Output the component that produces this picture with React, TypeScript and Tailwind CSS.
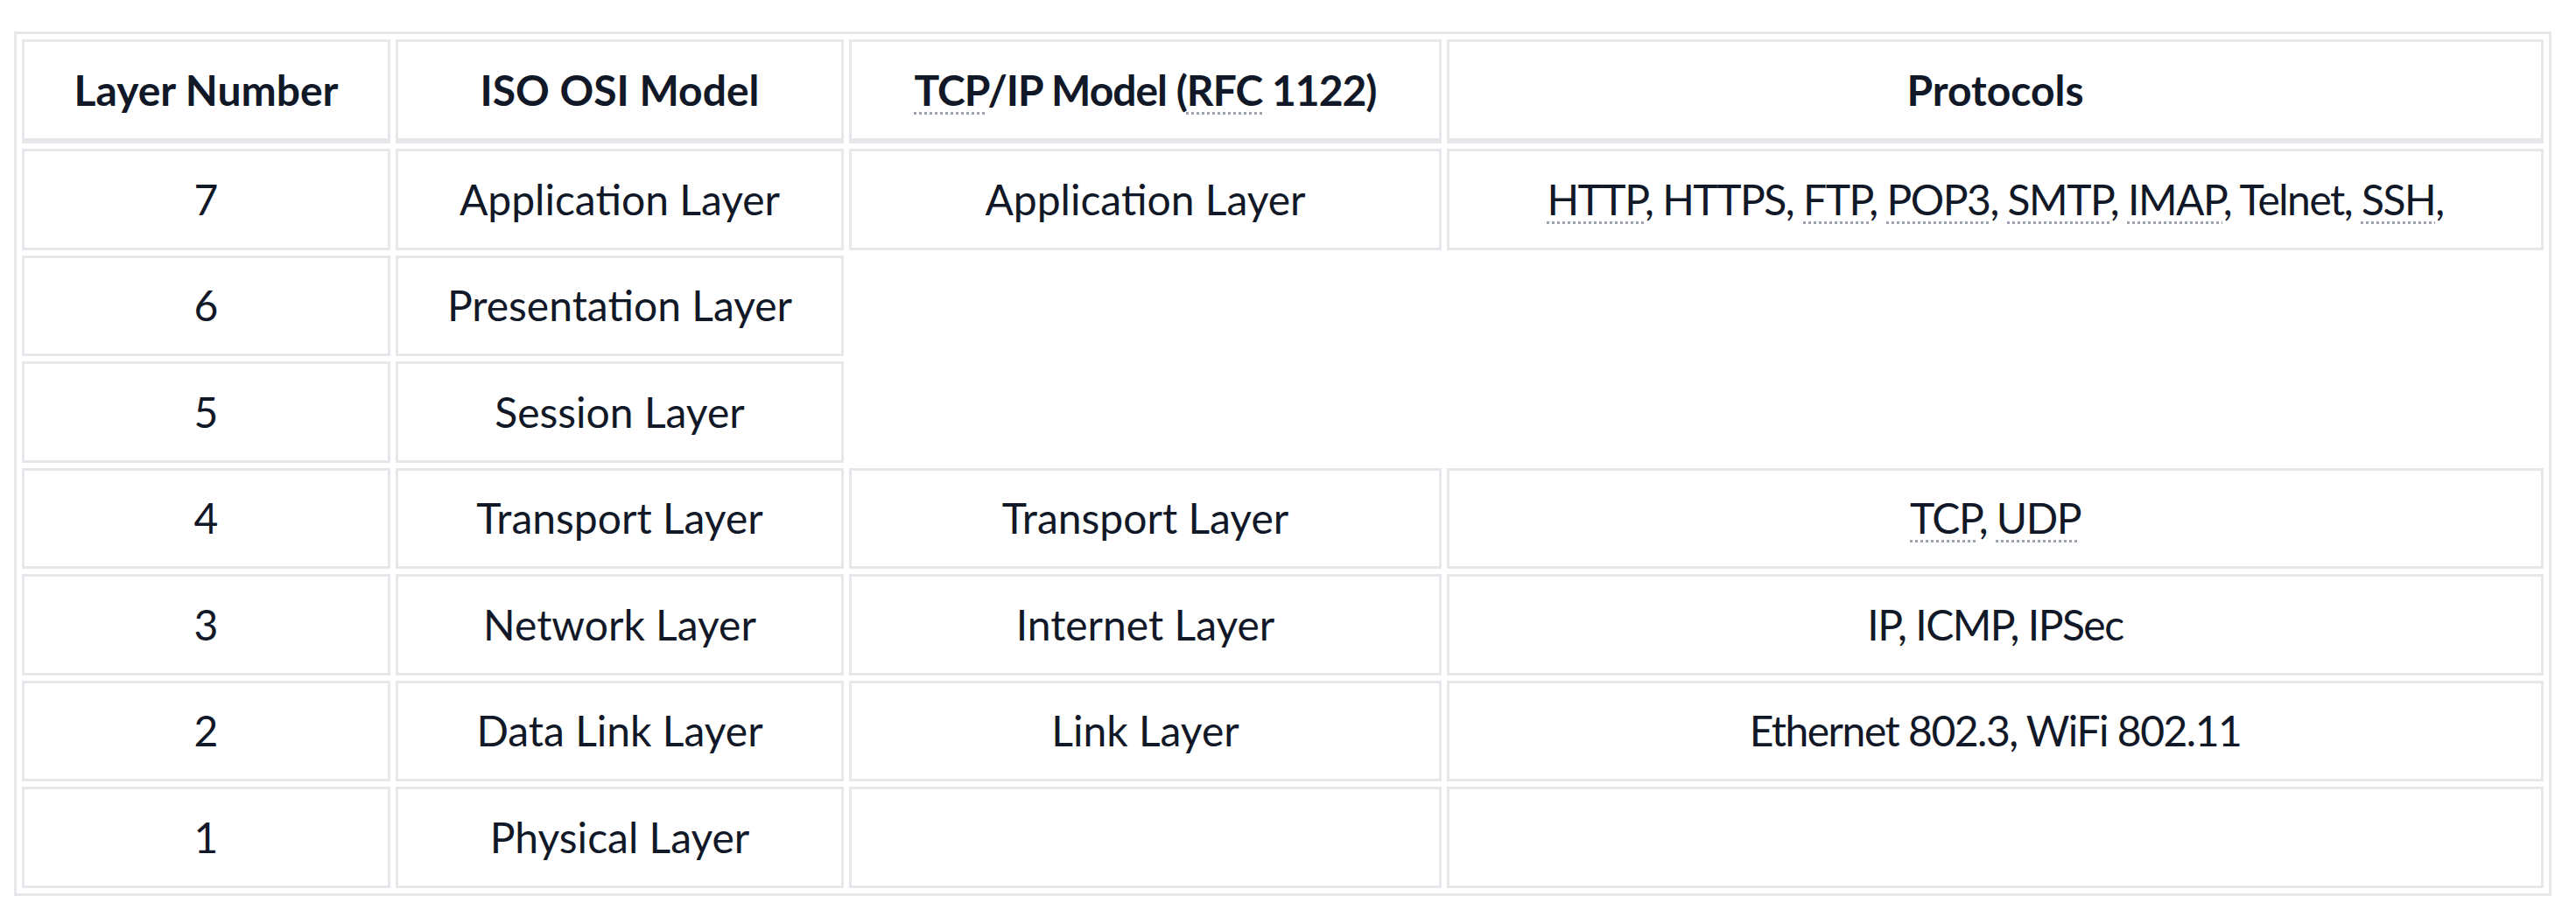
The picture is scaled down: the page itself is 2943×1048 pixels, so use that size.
import type { ReactNode } from "react";

const Abbr = ({ children }: { children: ReactNode }) => (
  <abbr className="underline decoration-dotted decoration-[3px] decoration-[#9ca3af] underline-offset-[7px]">
    {children}
  </abbr>
);

const cell =
  "border-[3px] border-[#e5e7eb] text-center align-middle h-[115.5px] px-6";

const rows: { n: string; osi: string; tcp?: ReactNode; proto?: ReactNode; empty?: boolean }[] = [
  {
    n: "7",
    osi: "Application Layer",
    tcp: "Application Layer",
    proto: (
      <>
        <Abbr>HTTP</Abbr>, HTTPS, <Abbr>FTP</Abbr>, <Abbr>POP3</Abbr>, <Abbr>SMTP</Abbr>,{" "}
        <Abbr>IMAP</Abbr>, Telnet, <Abbr>SSH</Abbr>,
      </>
    ),
  },
  { n: "6", osi: "Presentation Layer" },
  { n: "5", osi: "Session Layer" },
  {
    n: "4",
    osi: "Transport Layer",
    tcp: "Transport Layer",
    proto: (
      <>
        <Abbr>TCP</Abbr>, <Abbr>UDP</Abbr>
      </>
    ),
  },
  { n: "3", osi: "Network Layer", tcp: "Internet Layer", proto: "IP, ICMP, IPSec" },
  { n: "2", osi: "Data Link Layer", tcp: "Link Layer", proto: "Ethernet 802.3, WiFi 802.11" },
  { n: "1", osi: "Physical Layer", empty: true },
];

export default function App() {
  return (
    <div className="h-[1048px] overflow-hidden bg-white pl-4 pt-9 font-['Lato',sans-serif] text-[48px] leading-[1.5] text-[#111827]">
      <table className="table-fixed w-[2899px] border-separate border-spacing-[6px] border-[3px] border-[#e5e7eb]">
        <thead>
          <tr>
            <th className={`${cell} w-[421px] h-[119px] border-b-[6px] font-bold`}>Layer Number</th>
            <th className={`${cell} w-[512px] h-[119px] border-b-[6px] font-bold`}>ISO OSI Model</th>
            <th className={`${cell} w-[677px] h-[119px] border-b-[6px] font-bold tracking-[-1px]`}>
              <Abbr>TCP</Abbr>/IP Model (<Abbr>RFC</Abbr> 1122)
            </th>
            <th className={`${cell} w-[1253px] h-[119px] border-b-[6px] font-bold`}>Protocols</th>
          </tr>
        </thead>
        <tbody>
          {rows.map((r) => (
            <tr key={r.n}>
              <td className={cell}>{r.n}</td>
              <td className={cell}>{r.osi}</td>
              {r.tcp && <td className={cell}>{r.tcp}</td>}
              {r.proto && <td className={`${cell} tracking-[-1.5px]`}>{r.proto}</td>}
              {r.empty && (
                <>
                  <td className={cell}></td>
                  <td className={cell}></td>
                </>
              )}
            </tr>
          ))}
        </tbody>
      </table>
    </div>
  );
}
